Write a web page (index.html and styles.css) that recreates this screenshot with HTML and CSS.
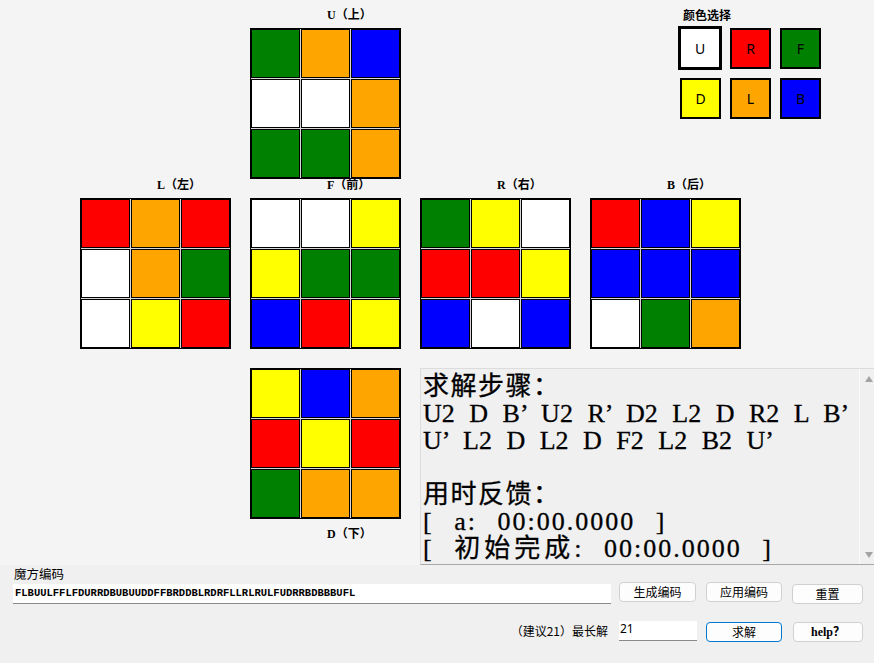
FILE: index.html
```html
<!DOCTYPE html>
<html lang="zh-CN">
<head>
<meta charset="utf-8">
<title>魔方求解</title>
<link rel="stylesheet" href="styles.css">
</head>
<body>
<div class="board">
  <div class="face-block pos-u">
    <div class="face-label">U（上）</div>
    <div class="face">
      <div class="cell c-g"></div><div class="cell c-o"></div><div class="cell c-b"></div>
      <div class="cell c-w"></div><div class="cell c-w"></div><div class="cell c-o"></div>
      <div class="cell c-g"></div><div class="cell c-g"></div><div class="cell c-o"></div>
    </div>
  </div>

  <div class="picker">
    <div class="picker-title">颜色选择</div>
    <div class="swatches">
      <div class="swatch c-w selected">U</div>
      <div class="swatch c-r">R</div>
      <div class="swatch c-g">F</div>
      <div class="swatch c-y">D</div>
      <div class="swatch c-o">L</div>
      <div class="swatch c-b">B</div>
    </div>
  </div>

  <div class="face-block pos-l">
    <div class="face-label">L（左）</div>
    <div class="face">
      <div class="cell c-r"></div><div class="cell c-o"></div><div class="cell c-r"></div>
      <div class="cell c-w"></div><div class="cell c-o"></div><div class="cell c-g"></div>
      <div class="cell c-w"></div><div class="cell c-y"></div><div class="cell c-r"></div>
    </div>
  </div>

  <div class="face-block pos-f">
    <div class="face-label">F（前）</div>
    <div class="face">
      <div class="cell c-w"></div><div class="cell c-w"></div><div class="cell c-y"></div>
      <div class="cell c-y"></div><div class="cell c-g"></div><div class="cell c-g"></div>
      <div class="cell c-b"></div><div class="cell c-r"></div><div class="cell c-y"></div>
    </div>
  </div>

  <div class="face-block pos-r">
    <div class="face-label">R（右）</div>
    <div class="face">
      <div class="cell c-g"></div><div class="cell c-y"></div><div class="cell c-w"></div>
      <div class="cell c-r"></div><div class="cell c-r"></div><div class="cell c-y"></div>
      <div class="cell c-b"></div><div class="cell c-w"></div><div class="cell c-b"></div>
    </div>
  </div>

  <div class="face-block pos-b">
    <div class="face-label">B（后）</div>
    <div class="face">
      <div class="cell c-r"></div><div class="cell c-b"></div><div class="cell c-y"></div>
      <div class="cell c-b"></div><div class="cell c-b"></div><div class="cell c-b"></div>
      <div class="cell c-w"></div><div class="cell c-g"></div><div class="cell c-o"></div>
    </div>
  </div>

  <div class="face-block pos-d">
    <div class="face">
      <div class="cell c-y"></div><div class="cell c-b"></div><div class="cell c-o"></div>
      <div class="cell c-r"></div><div class="cell c-y"></div><div class="cell c-r"></div>
      <div class="cell c-g"></div><div class="cell c-o"></div><div class="cell c-o"></div>
    </div>
    <div class="face-label face-label--below">D（下）</div>
  </div>

  <div class="solution">
    <div class="solution-text">
      <div class="line heading">求解步骤：</div>
      <div class="line moves">U2 D B’ U2 R’ D2 L2 D R2 L B’</div>
      <div class="line moves">U’ L2 D L2 D F2 L2 B2 U’</div>
      <div class="line">&nbsp;</div>
      <div class="line heading">用时反馈：</div>
      <div class="line time">[ a: 00:00.0000 ]</div>
      <div class="line time">[ <span class="cjk">初始完成</span>: 00:00.0000 ]</div>
    </div>
    <div class="scrollbar">
      <span class="arrow arrow-up"></span>
      <span class="arrow arrow-down"></span>
    </div>
  </div>
</div>

<div class="panel">
  <div class="panel-title">魔方编码</div>
  <div class="panel-row row-code">
    <input class="field field-code" type="text" value="FLBUULFFLFDURRDBUBUUDDFFBRDDBLRDRFLLRLRULFUDRRBDBBBUFL">
    <button class="btn btn-gen">生成编码</button>
    <button class="btn btn-apply">应用编码</button>
    <button class="btn btn-reset">重置</button>
  </div>
  <div class="panel-row row-solve">
    <label class="solve-label">（建议21）最长解</label>
    <input class="field field-len" type="text" value="21">
    <button class="btn btn-solve">求解</button>
    <button class="btn btn-help">help？</button>
  </div>
</div>
</body>
</html>
```
FILE: styles.css
```css
html, body {
  margin: 0;
  padding: 0;
  overflow: hidden;
}

body {
  width: 874px;
  height: 663px;
  background: #f0f0f0;
  font-family: "Noto Sans CJK SC", sans-serif;
  color: #000;
}

/* ---------- board ---------- */
.board {
  display: grid;
  grid-template-columns: 151px 151px 151px 151px 1fr;
  column-gap: 19px;
  align-items: start;
  padding: 9px 0 0 80px;
  height: 565px;
  box-sizing: border-box;
  background: #f4f4f4;
}

.pos-u { grid-column: 2; grid-row: 1; }
.pos-l { grid-column: 1; grid-row: 2; }
.pos-f { grid-column: 2; grid-row: 2; }
.pos-r { grid-column: 3; grid-row: 2; }
.pos-b { grid-column: 4; grid-row: 2; }
.pos-d { grid-column: 2; grid-row: 3; padding-top: 19px; }

.face-label {
  height: 12px;
  line-height: 12px;
  margin-bottom: 7px;
  padding-left: 77px;
  font-family: "Liberation Serif", "Noto Sans CJK SC", serif;
  font-weight: bold;
  font-size: 12px;
  white-space: nowrap;
}

.face-label--below {
  margin: 9px 0 0;
}

.face {
  display: grid;
  grid-template-columns: repeat(3, 49px);
  grid-auto-rows: 49px;
  gap: 1px;
  width: 151px;
  box-sizing: border-box;
  border: 1px solid #000;
  background: #d8d8d8;
}

.cell {
  border: 1px solid #000;
  box-sizing: border-box;
}

.c-w { background: #ffffff; }
.c-r { background: #ff0000; }
.c-g { background: #008000; }
.c-y { background: #ffff00; }
.c-o { background: #ffa500; }
.c-b { background: #0000ff; }

/* ---------- colour picker ---------- */
.picker {
  grid-column: 4 / 6;
  grid-row: 1;
  margin-left: 90px;
}

.picker-title {
  height: 12px;
  line-height: 12px;
  margin-bottom: 7px;
  padding-left: 3px;
  font-size: 12px;
  font-weight: bold;
}

.swatches {
  display: grid;
  grid-template-columns: repeat(3, 41px);
  grid-auto-rows: 41px;
  gap: 9px;
}

.swatch {
  width: 41px;
  height: 41px;
  box-sizing: border-box;
  border: 2px solid #000;
  display: flex;
  align-items: center;
  justify-content: center;
  font-family: "Noto Sans", "Open Sans", sans-serif;
  font-size: 14px;
  color: #000;
}

.swatch.selected {
  width: 44px;
  height: 44px;
  border-width: 3px;
  margin: -2px 0 0 -2px;
}

/* ---------- solution box ---------- */
.solution {
  grid-column: 3 / 6;
  grid-row: 3;
  margin-top: 19px;
  margin-right: -4px;
  height: 197px;
  box-sizing: border-box;
  display: flex;
  background: #f0f0f0;
  border: 1px solid #dcdcdc;
  border-bottom-color: #a8a8a8;
}

.solution-text {
  flex: 1;
  padding: 4px 0 0 2px;
  overflow: hidden;
  font-family: "Liberation Serif", "Noto Sans CJK SC", serif;
  font-size: 26px;
  line-height: 27px;
  -webkit-text-stroke: 0.3px #000;
}

.line {
  height: 27px;
  white-space: pre;
}
.heading { letter-spacing: 1.5px; }
.moves { word-spacing: 8px; }
.time { letter-spacing: 2px; word-spacing: 12px; }
.time .cjk { letter-spacing: 4px; }

.scrollbar {
  width: 18px;
  box-sizing: border-box;
  border-left: 1px solid #fafafa;
  display: flex;
  flex-direction: column;
  justify-content: space-between;
  align-items: center;
  padding: 7px 0 6px;
}

.arrow {
  width: 0;
  height: 0;
  border-left: 4px solid transparent;
  border-right: 4px solid transparent;
}

.arrow-up { border-bottom: 6px solid #a3a3a3; }
.arrow-down { border-top: 6px solid #a3a3a3; }

/* ---------- bottom panel ---------- */
.panel {
  height: 98px;
  box-sizing: border-box;
  padding: 2px 0 0 13px;
  background: #f0f0f0;
}

.panel-title {
  height: 15px;
  line-height: 14px;
  padding-left: 1px;
  font-size: 12.5px;
}

.panel-row {
  display: flex;
  align-items: flex-start;
}

.row-code { height: 22px; }
.row-solve { margin-top: 17px; }

.field {
  height: 20px;
  box-sizing: border-box;
  margin: 0;
  border: none;
  border-bottom: 1px solid #8a8a8a;
  background: #fff;
  outline: none;
  color: #000;
}

.field-code {
  width: 598px;
  margin-top: 2px;
  padding: 0 2px 1px;
  font-family: "Liberation Mono", monospace;
  font-weight: bold;
  font-size: 10.5px;
}

.field-len {
  width: 78px;
  padding: 0 1px 5px;
  font-family: "Noto Sans", "Open Sans", sans-serif;
  font-size: 12px;
}

.btn {
  height: 20px;
  box-sizing: border-box;
  margin: 0;
  padding: 0;
  border: 1px solid #d0d0d0;
  border-radius: 4px;
  background: #fdfdfd;
  font-family: "Noto Sans CJK SC", sans-serif;
  font-size: 12px;
  line-height: 16px;
  white-space: nowrap;
  color: #000;
}

.btn-gen { width: 77px; margin-left: 8px; }
.btn-apply { width: 76px; margin-left: 10px; }
.btn-reset { width: 71px; margin-left: 10px; margin-top: 2px; }

.solve-label {
  width: 606px;
  box-sizing: border-box;
  padding: 3px 11px 0 0;
  text-align: right;
  font-size: 12px;
  line-height: 14px;
}

.btn-solve {
  width: 76px;
  margin-left: 9px;
  margin-top: 1px;
  border-color: #0078d4;
}

.btn-help {
  width: 70px;
  margin-left: 11px;
  margin-top: 1px;
  font-family: "Liberation Serif", "Noto Sans CJK SC", serif;
  font-weight: bold;
  font-size: 12px;
}
```
